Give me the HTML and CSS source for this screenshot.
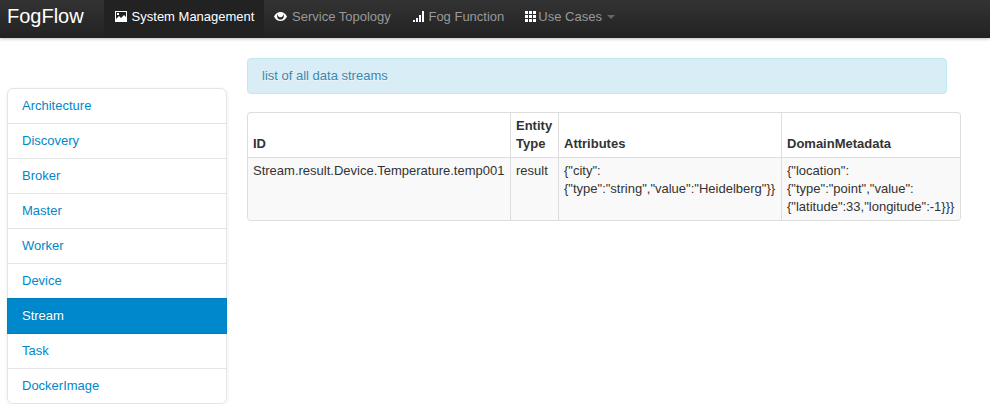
FILE: index.html
```html
<!DOCTYPE html>
<html lang="en">
<head>
<meta charset="utf-8">
<title>FogFlow</title>
<link rel="stylesheet" href="styles.css">
</head>
<body>
<header class="navbar">
  <a class="brand">FogFlow</a>
  <nav class="nav">
    <a class="nav-link active"><svg class="icon" viewBox="0 0 13 13"><path fill-rule="evenodd" d="M0 1h12v11H0zM1 2v7l3-3 2 2 3-3 2 2V2zM2 3h2v2H2z"/></svg> System Management</a>
    <a class="nav-link"><svg class="icon" viewBox="1 0 13 13"><path fill-rule="evenodd" d="M0 6.500C1.600 3.500 3.700 2 6.500 2S11.400 3.500 13 6.500C11.400 9.500 9.300 11 6.500 11S1.600 9.500 0 6.500zM3.700 3.900C2.700 5.900 2.900 9.500 6.500 9.500S10.300 5.900 9.300 3.900C9.300 5.600 8.500 7.300 6.500 7.300S3.700 5.600 3.700 3.900z"/><path d="M5 4h2.500v2.500H5z"/></svg> Service Topology</a>
    <a class="nav-link"><svg class="icon" viewBox="1 0 13 13"><path d="M2 10h2v2H2zM5 8h2v4H5zM8 5h2v7H8zM11 1h2v11h-2z"/></svg> Fog Function</a>
    <a class="nav-link"><svg class="icon" viewBox="1 0 13 13"><path d="M1 1h3v3H1zM5 1h3v3H5zM9 1h3v3H9zM1 5h3v3H1zM5 5h3v3H5zM9 5h3v3H9zM1 9h3v3H1zM5 9h3v3H5zM9 9h3v3H9z"/></svg><span class="menu-label">Use Cases</span> <b class="caret"></b></a>
  </nav>
</header>
<div class="layout">
  <ul class="sidebar">
    <li><a>Architecture</a></li>
    <li><a>Discovery</a></li>
    <li><a>Broker</a></li>
    <li><a>Master</a></li>
    <li><a>Worker</a></li>
    <li><a>Device</a></li>
    <li class="active"><a>Stream</a></li>
    <li><a>Task</a></li>
    <li><a>DockerImage</a></li>
  </ul>
  <main class="content">
    <div class="alert">list of all data streams</div>
    <table class="table">
      <colgroup><col class="col-id"><col class="col-type"><col class="col-attributes"><col class="col-metadata"></colgroup>
      <thead>
        <tr><th>ID</th><th>Entity Type</th><th>Attributes</th><th>DomainMetadata</th></tr>
      </thead>
      <tbody>
        <tr>
          <td>Stream.result.Device.Temperature.temp001</td>
          <td>result</td>
          <td>{"city":<br>{"type":"string","value":"Heidelberg"}}</td>
          <td>{"location":<br>{"type":"point","value":<br>{"latitude":33,"longitude":-1}}}</td>
        </tr>
      </tbody>
    </table>
  </main>
</div>
</body>
</html>
```
FILE: styles.css
```css
* { box-sizing: border-box; }
body {
  margin: 0;
  overflow: hidden;
  background: #fff;
  color: #333;
  font: 13px/18px "Liberation Sans", Arial, sans-serif;
}
.navbar {
  display: flex;
  height: 38px;
  padding-left: 7px;
  background: linear-gradient(#333, #222);
  box-shadow: 0 1px 3px rgba(0, 0, 0, .25);
}
.brand {
  width: 97px;
  padding-top: 7px;
  color: #fff;
  font-size: 20px;
  line-height: 18px;
}
.nav { display: flex; }
.nav-link {
  padding: 8px 10px 12px;
  color: #999;
  white-space: nowrap;
}
.nav-link.active { background: #222; color: #fff; }
.icon {
  display: inline-block;
  overflow: visible;
  width: 13px;
  height: 13px;
  margin-left: 1px;
  vertical-align: -2px;
  fill: #fff;
}
.caret {
  display: inline-block;
  margin-left: 1px;
  border: 4px solid transparent;
  border-top-color: #666;
  border-bottom: 0;
  vertical-align: 2px;
}
.layout {
  display: flex;
  align-items: flex-start;
  padding: 20px 7px 0;
}
.sidebar {
  width: 220px;
  margin: 30px 20px 0 0;
  padding: 0;
  list-style: none;
  border-radius: 6px;
  box-shadow: 0 1px 4px rgba(0, 0, 0, .065);
}
.sidebar a {
  display: block;
  height: 36px;
  margin-bottom: -1px;
  padding: 8px 14px;
  border: 1px solid #e5e5e5;
  color: #08c;
}
.sidebar li:first-child a { border-radius: 6px 6px 0 0; }
.sidebar li:last-child a { margin-bottom: 0; border-radius: 0 0 6px 6px; }
.sidebar .active a {
  position: relative;
  border-color: #0081c2;
  background: #08c;
  color: #fff;
  text-shadow: 0 -1px 0 rgba(0, 0, 0, .2);
}
.alert {
  width: 700px;
  height: 36px;
  margin-bottom: 18px;
  padding: 8px 14px;
  border: 1px solid #bce8f1;
  border-radius: 4px;
  background: #d9edf7;
  color: #3a87ad;
  text-shadow: 0 1px 0 rgba(255, 255, 255, .5);
}
.table {
  width: 714px;
  table-layout: fixed;
  border: 1px solid #ddd;
  border-left: 0;
  border-collapse: separate;
  border-spacing: 0;
  border-radius: 4px;
}
.col-id { width: 263px; }
.col-type { width: 48px; }
.col-attributes { width: 223px; }
.col-metadata { width: 179px; }
.table th,
.table td {
  padding: 4px 0 4px 5px;
  border-left: 1px solid #ddd;
  text-align: left;
  vertical-align: top;
}
.table th { vertical-align: bottom; }
.table td { border-top: 1px solid #ddd; background: #f9f9f9; }
.table th:first-child { border-top-left-radius: 4px; }
.table td:first-child { border-bottom-left-radius: 4px; }
.table td:last-child { border-bottom-right-radius: 4px; }
```
